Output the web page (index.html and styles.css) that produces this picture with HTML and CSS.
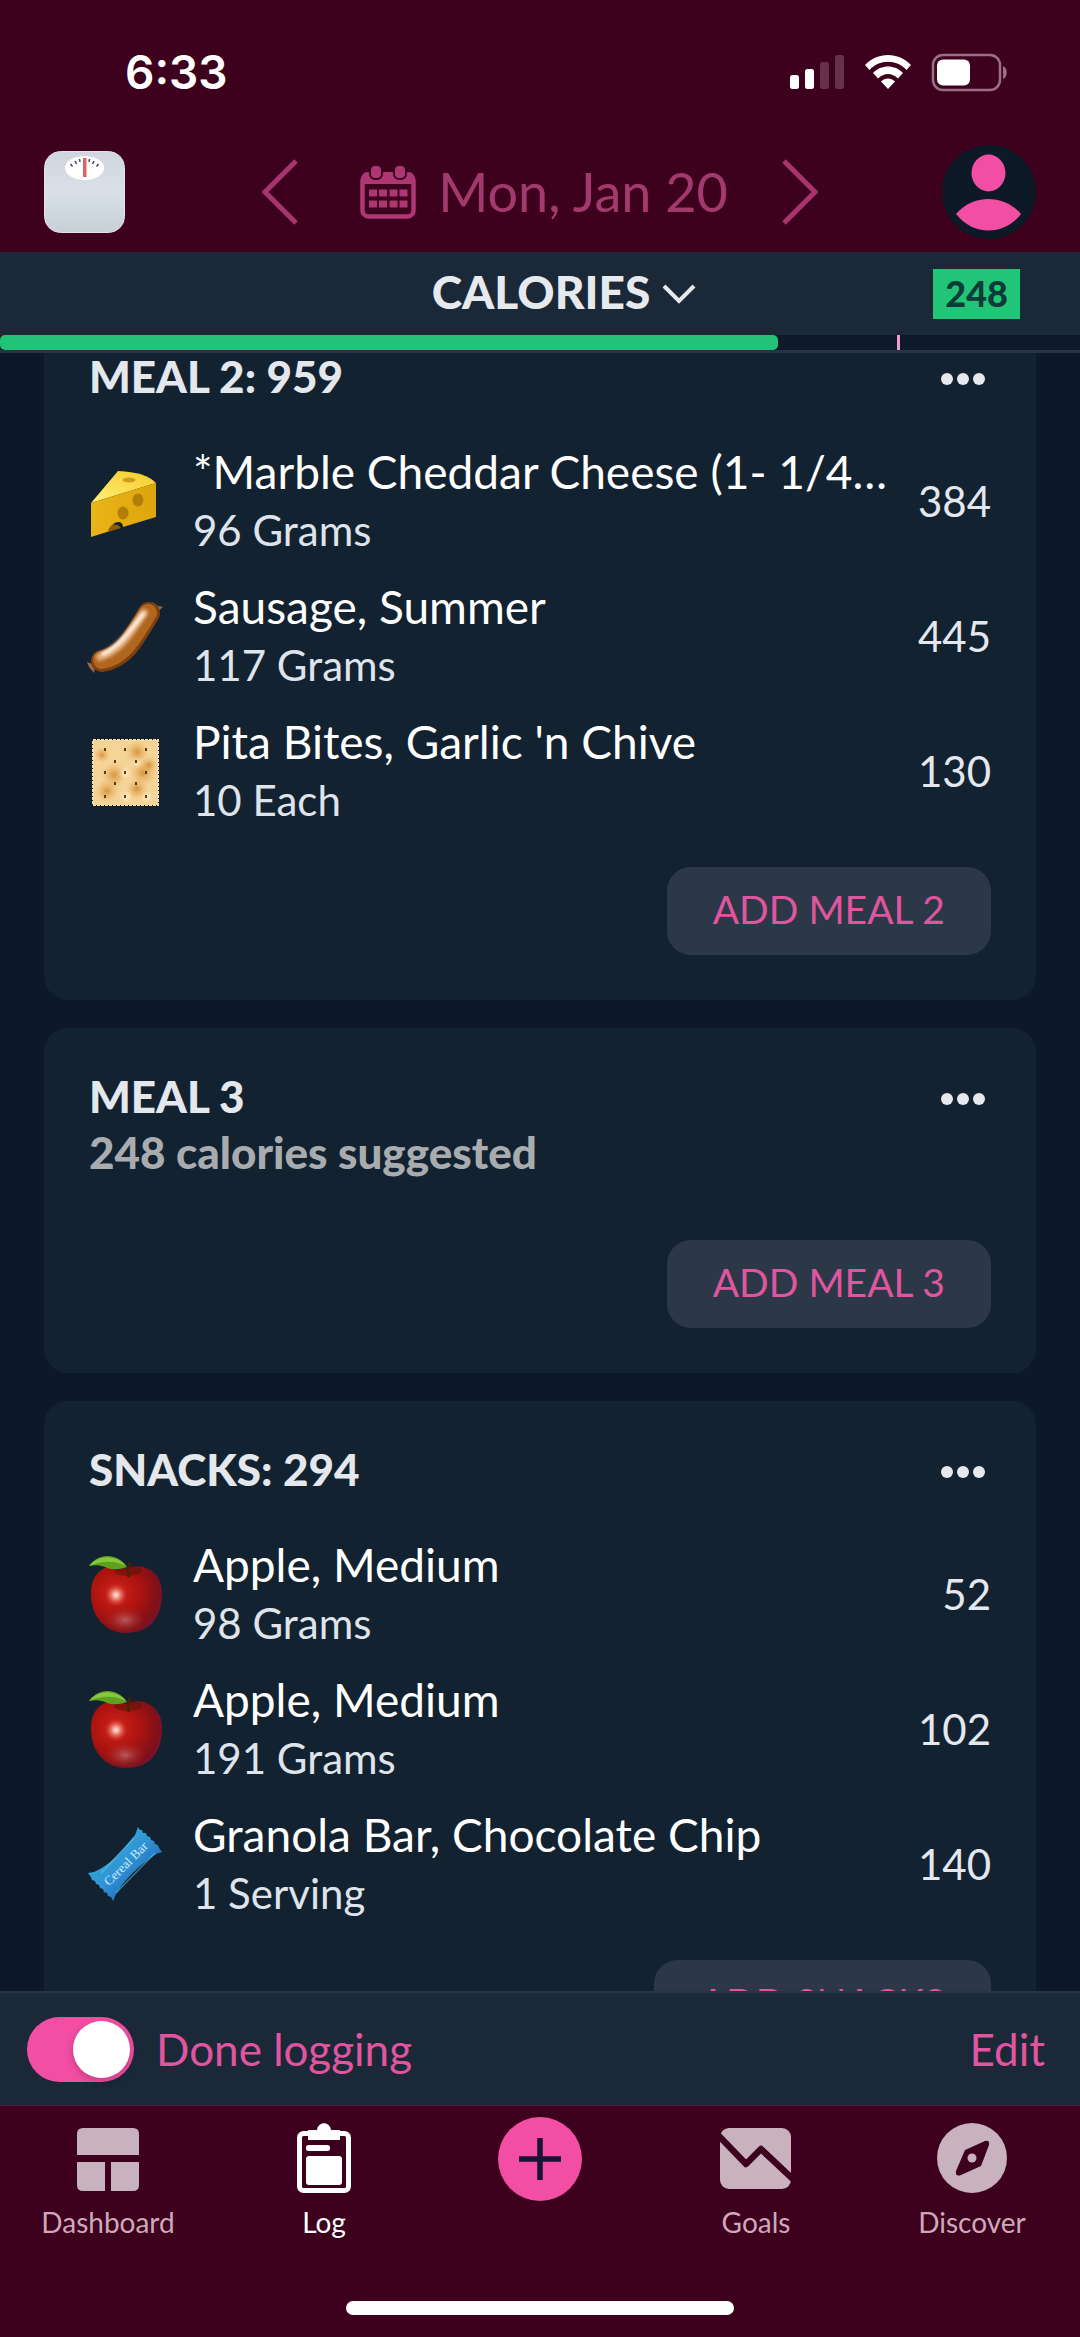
FILE: index.html
```html
<!DOCTYPE html>
<html lang="en">
<head>
<meta charset="utf-8">
<meta name="viewport" content="width=device-width, initial-scale=1">
<title>Food log</title>
<link rel="stylesheet" href="styles.css">
</head>
<body>
<svg class="defs" aria-hidden="true">
  <defs>
    <linearGradient id="scaleBody" x1="0" y1="0" x2="0" y2="1"><stop offset="0" stop-color="#cfd6df"/><stop offset=".5" stop-color="#dae0e8"/><stop offset="1" stop-color="#c6d0d6"/></linearGradient>
    <linearGradient id="cheeseTop" x1="0" y1="1" x2="1" y2="0"><stop offset="0" stop-color="#fff078"/><stop offset="1" stop-color="#f6cb2a"/></linearGradient>
    <linearGradient id="cheeseSide" x1="0" y1="0" x2="1" y2="0"><stop offset="0" stop-color="#eab519"/><stop offset="1" stop-color="#dda50c"/></linearGradient>
    <linearGradient id="bar" x1="0" y1="0" x2="1" y2="1"><stop offset="0" stop-color="#3fb8d8"/><stop offset=".5" stop-color="#2f93d6"/><stop offset=".8" stop-color="#1f63b4"/><stop offset="1" stop-color="#2f9fd0"/></linearGradient>
    <radialGradient id="appleBody" cx=".35" cy=".4" r=".75"><stop offset="0" stop-color="#cf221b"/><stop offset=".45" stop-color="#ad130f"/><stop offset=".8" stop-color="#7d1018"/><stop offset="1" stop-color="#7a1250"/></radialGradient>
    <radialGradient id="appleShine"><stop offset="0" stop-color="#fff0e6"/><stop offset=".3" stop-color="#f4a594" stop-opacity=".9"/><stop offset="1" stop-color="#d8261f" stop-opacity="0"/></radialGradient>
    <radialGradient id="appleGlow"><stop offset="0" stop-color="#c98a8a" stop-opacity=".6"/><stop offset="1" stop-color="#a02020" stop-opacity="0"/></radialGradient>
    <radialGradient id="toast"><stop offset="0" stop-color="#cf8428" stop-opacity=".8"/><stop offset="1" stop-color="#e8b060" stop-opacity="0"/></radialGradient>
    <filter id="soft" x="-30%" y="-30%" width="160%" height="160%"><feGaussianBlur stdDeviation="1.6"/></filter>
    <symbol id="apple" viewBox="0 0 74 80">
      <path d="M37 15C28 9 2 10 2 40c0 22 14 39 35 39 22 0 36-14 36-40C73 13 48 8 37 15z" fill="url(#appleBody)"/>
      <ellipse cx="36" cy="66" rx="22" ry="14" fill="url(#appleGlow)"/>
      <circle cx="27" cy="41" r="12" fill="url(#appleShine)"/>
      <ellipse cx="39" cy="17" rx="14" ry="5" fill="#5a1408" opacity=".55"/>
      <path d="M38 23c0-6 0-10 2-15l2 1c-2 5-2 8-1 14z" fill="#4c2309"/>
      <path d="M0 12C9-1 28-2 38 13c-9 3-16 3-22 0-6-2-10-2-16-1z" fill="#5fa021"/>
      <path d="M0 12C9 1 26 0 37 12 26 7 14 6 0 12z" fill="#86c83c"/>
    </symbol>
  </defs>
</svg>
<div class="app">
  <header class="top">
    <div class="status">
      <span class="time">6:33</span>
      <svg class="status-icons" viewBox="0 0 217 40" aria-label="Signal, Wi-Fi and battery">
        <rect x="0" y="23" width="9" height="14" rx="2.500" fill="#fff"/>
        <rect x="15" y="17" width="9" height="20" rx="2.500" fill="#fff"/>
        <rect x="30" y="10" width="9" height="27" rx="2.500" fill="#69304b"/>
        <rect x="45" y="3" width="9" height="34" rx="2.500" fill="#69304b"/>
        <path d="M75 13C87 -.4 109 -.4 121 13l-4.500 5C107 7 89 7 79.500 18zM83 21c8-8.600 22-8.600 30 0l-5 5.500c-6-6-14-6-20 0zM91 29.500c4-4 10-4 14 0L98 37z" fill="#fff"/>
        <rect x="143" y="3" width="67" height="35" rx="10" fill="none" stroke="#9a6f84" stroke-width="2.500"/>
        <rect x="147" y="7" width="33" height="26" rx="6" fill="#fff" transform="translate(0 .5)"/>
        <path d="M213 14c5 2 5 11 0 13z" fill="#9a6f84"/>
      </svg>
    </div>
    <nav class="datebar" aria-label="Day">
      <button class="plain scale" aria-label="Weigh in">
        <svg viewBox="0 0 81 82"><rect x=".5" y=".5" width="80" height="81" rx="16" fill="url(#scaleBody)" stroke="#e9dfe8"/><ellipse cx="40.500" cy="17" rx="19.500" ry="12" fill="#fff"/><path d="M26.500 13l2 2.500M31 10l1.500 3M35.500 8l.5 3M45.500 8l-.5 3M50 10l-1.500 3M54.500 13l-2 2.500" stroke="#445" stroke-width="1.500" fill="none"/><rect x="39" y="7" width="3.500" height="19" fill="#dd6464"/></svg>
      </button>
      <div class="picker">
        <button class="plain chev" aria-label="Previous day"><svg viewBox="0 0 36 66"><path d="M34 2L3 33l31 31" fill="none" stroke="#a8346f" stroke-width="5"/></svg></button>
        <button class="plain date">
          <svg viewBox="0 0 56 53"><rect x="2.500" y="8.500" width="51" height="42" rx="6" fill="none" stroke="#ae3673" stroke-width="4.500"/><path d="M2 18v-6q0-6 6-6h40q6 0 6 6v6z" fill="#ae3673"/><rect x="10" y="-1" width="12" height="14" rx="5" fill="#ae3673" stroke="#3d001d" stroke-width="2"/><rect x="34" y="-1" width="12" height="14" rx="5" fill="#ae3673" stroke="#3d001d" stroke-width="2"/><path d="M9 23.500h8v7H9zM19 23.500h8v7h-8zM29.500 23.500h8v7h-8zM39.500 23.500h8v7h-8zM9 34.500h8v7H9zM19 34.500h8v7h-8zM29.500 34.500h8v7h-8zM39.500 34.500h8v7h-8z" fill="#ae3673"/></svg>
          <span>Mon, Jan 20</span>
        </button>
        <button class="plain chev" aria-label="Next day"><svg viewBox="0 0 36 66"><path d="M2 2l31 31L2 64" fill="none" stroke="#a8346f" stroke-width="5"/></svg></button>
      </div>
      <button class="plain avatar" aria-label="Profile">
        <svg viewBox="0 0 94 94"><circle cx="47" cy="47" r="47" fill="#0d1927"/><ellipse cx="46.500" cy="28" rx="17" ry="18.500" fill="#f24ea3"/><path d="M14 69c17-20 48-20 65 0-17 22-48 22-65 0z" fill="#f24ea3"/></svg>
      </button>
    </nav>
  </header>

  <section class="summary" aria-label="Budget">
    <div class="summary-row">
      <button class="plain metric"><span>CALORIES</span><svg viewBox="0 0 34 22"><path d="M2 3l15 15L32 3" fill="none" stroke="#e6e9ed" stroke-width="4"/></svg></button>
      <span class="badge">248</span>
    </div>
    <div class="progress"><div class="fill" style="width:72%"></div><div class="marker" style="left:83.1%"></div></div>
  </section>

  <main class="feed">
    <div class="cards">
      <section class="card">
        <div class="card-head"><h2>MEAL 2: 959</h2><button class="plain more" aria-label="Meal 2 options"><i></i><i></i><i></i></button></div>
        <ul class="foods">
          <li>
            <svg class="food" viewBox="0 0 74 80"><path d="M2 42L29 10q28 1 38 12z" fill="url(#cheeseTop)"/><path d="M2 42L67 22v34L34 66c0-8-12-6-13 4L2 76z" fill="url(#cheeseSide)"/><path d="M19 71c1-8 9-10 13-4z" fill="#8e5c06"/><ellipse cx="40" cy="19" rx="6.500" ry="2.500" fill="#d59a1c"/><ellipse cx="49" cy="39" rx="5.500" ry="6.500" fill="#b27d0b"/><ellipse cx="34" cy="52" rx="5.500" ry="6.500" fill="#b27d0b"/></svg>
            <div class="text"><span class="name">*Marble Cheddar Cheese (1- 1/4…</span><span class="qty">96 Grams</span></div><span class="cal">384</span>
          </li>
          <li>
            <svg class="food" viewBox="0 0 74 80"><path d="M64 14l-1-8 6 4 5 1-6 5zM6 69l-8-3 2 5 5 6 1-6z" fill="#9a6747"/><path d="M13 65C36 61 45 42 60 17" fill="none" stroke="#7b3f10" stroke-width="22" stroke-linecap="round"/><path d="M13 64C35 60 44 41 59 17" fill="none" stroke="#b0661f" stroke-width="18" stroke-linecap="round"/><path d="M11 61C32 54 41 37 55 17" fill="none" stroke="#e0a878" stroke-width="8" stroke-linecap="round" filter="url(#soft)"/><path d="M14 58C31 50 39 37 54 18" fill="none" stroke="#fff1e2" stroke-width="4" stroke-linecap="round" filter="url(#soft)"/></svg>
            <div class="text"><span class="name">Sausage, Summer</span><span class="qty">117 Grams</span></div><span class="cal">445</span>
          </li>
          <li>
            <svg class="food" viewBox="0 0 74 80"><rect x="4" y="9" width="65" height="65" fill="#f5d498" stroke="#f7dca6" stroke-width="2" stroke-dasharray="3 1"/><g fill="url(#toast)"><circle cx="48" cy="21" r="12"/><circle cx="25" cy="44" r="13"/><circle cx="54" cy="42" r="13"/><circle cx="18" cy="60" r="12"/><circle cx="60" cy="34" r="9"/><circle cx="13" cy="24" r="8"/><circle cx="48" cy="58" r="11"/></g><g fill="#fff0cc" opacity=".7" filter="url(#soft)"><circle cx="36" cy="42" r="4"/><circle cx="37" cy="66" r="4"/><circle cx="58" cy="66" r="4"/><circle cx="48" cy="32" r="3"/></g><path d="M16 17v3M36 17v3M57 17v3M26 29v3M47 29v3M16 40v3M36 40v3M57 40v3M26 51v3M47 51v3M16 64v3M36 64v3M57 64v3" stroke="#5a3a18" stroke-width="2"/></svg>
            <div class="text"><span class="name">Pita Bites, Garlic 'n Chive</span><span class="qty">10 Each</span></div><span class="cal">130</span>
          </li>
        </ul>
        <button class="add">ADD MEAL 2</button>
      </section>

      <section class="card">
        <div class="card-head"><h2>MEAL 3</h2><button class="plain more" aria-label="Meal 3 options"><i></i><i></i><i></i></button></div>
        <p class="hint">248 calories suggested</p>
        <button class="add">ADD MEAL 3</button>
      </section>

      <section class="card">
        <div class="card-head"><h2>SNACKS: 294</h2><button class="plain more" aria-label="Snacks options"><i></i><i></i><i></i></button></div>
        <ul class="foods">
          <li>
            <svg class="food"><use href="#apple"/></svg>
            <div class="text"><span class="name">Apple, Medium</span><span class="qty">98 Grams</span></div><span class="cal">52</span>
          </li>
          <li>
            <svg class="food"><use href="#apple"/></svg>
            <div class="text"><span class="name">Apple, Medium</span><span class="qty">191 Grams</span></div><span class="cal">102</span>
          </li>
          <li>
            <svg class="food" viewBox="0 0 74 80"><path d="M49 3l2 3 2 0 1 3 3 0 1 3 3 1 1 3 3 1 1 3 3 1 1 3 3 4-6 2C55 39 40 49 27 70l-3 7-2-4-3-1-1-3-3-1-1-3-3-1-1-3-3-1-1-3-3-1-1-3-3-4 6-1C23 40 34 26 46 11z" fill="url(#bar)"/><path d="M12 49L45 14M27 69L66 29" stroke="#66cfe8" stroke-width="1.500" opacity=".5"/><text class="wrapper" x="37" y="44" transform="rotate(-45 37 40)" text-anchor="middle">Cereal Bar</text></svg>
            <div class="text"><span class="name">Granola Bar, Chocolate Chip</span><span class="qty">1 Serving</span></div><span class="cal">140</span>
          </li>
        </ul>
        <button class="add">ADD SNACKS</button>
      </section>
    </div>
  </main>

  <div class="done">
    <label class="done-label"><input type="checkbox" class="switch" checked><span>Done logging</span></label>
    <button class="plain edit">Edit</button>
  </div>

  <footer class="bottom">
    <nav class="tabs" aria-label="Main">
      <a href="#dashboard"><svg viewBox="0 0 84 84"><path d="M11 38V17q0-6 6-6h50q6 0 6 6v21zM11 45h28v29H17q-6 0-6-6zM45 45h28v23q0 6-6 6H45z" fill="#c8b2bd"/></svg><span>Dashboard</span></a>
      <a href="#log" class="on" aria-current="page"><svg viewBox="0 0 84 84"><rect x="17.500" y="16.500" width="49" height="57" rx="4" fill="none" stroke="#fff" stroke-width="5"/><path d="M26 13h9c1-9 13-9 14 0h9v10H26z" fill="#fff"/><rect x="24" y="28" width="24" height="6" rx="2.500" fill="#fff"/><rect x="24" y="39" width="36" height="29" rx="3" fill="#fff"/></svg><span>Log</span></a>
      <a href="#add" class="plus" aria-label="Add"><svg viewBox="0 0 84 84"><circle cx="42" cy="42" r="42" fill="#f24ea3"/><path d="M21 42h42M42 21v42" stroke="#1b1333" stroke-width="5.500"/></svg></a>
      <a href="#goals"><svg viewBox="0 0 84 84"><rect x="6" y="11" width="71" height="61" rx="9" fill="#c8b2bd"/><path d="M2 16L32 47l15-15 35 33" fill="none" stroke="#3d001d" stroke-width="6.500" stroke-linejoin="round"/></svg><span>Goals</span></a>
      <a href="#discover"><svg viewBox="0 0 84 84"><circle cx="42" cy="41" r="35" fill="#c8b2bd"/><path d="M35 33l20-9q5-1 4 4l-8 21-20 9q-6 2-5-4z" fill="#3d001d"/><circle cx="42" cy="41" r="4.500" fill="#c8b2bd"/></svg><span>Discover</span></a>
    </nav>
    <div class="home"></div>
  </footer>
</div>
</body>
</html>
```
FILE: styles.css
```css
* { box-sizing: border-box; }
body {
  margin: 0;
  background: #3d001d;
  font-family: Lato, "Liberation Sans", sans-serif;
  color: #fff;
}
h2, p, ul { margin: 0; padding: 0; }
svg { display: block; }
.defs { position: absolute; width: 0; height: 0; }
button { font-family: inherit; cursor: pointer; }
.plain { border: 0; padding: 0; background: none; color: inherit; }

.app { display: flex; flex-direction: column; height: 100vh; }

.status {
  display: flex;
  align-items: center;
  justify-content: space-between;
  height: 132px;
  padding: 12px 73px 0 125px;
}
.time { font: 600 46px/56px Inter, sans-serif; }
.status-icons { width: 217px; height: 40px; }

.datebar {
  display: grid;
  grid-template-columns: 1fr auto 1fr;
  align-items: center;
  height: 120px;
  padding: 0 44px;
}
.scale { width: 81px; }
.avatar { width: 94px; justify-self: end; }
.picker { display: flex; align-items: center; gap: 54px; color: #a33a6e; }
.chev { width: 36px; }
.picker .date { display: flex; align-items: center; gap: 22px; padding-left: 8px; font-size: 54px; line-height: 64px; }
.date svg { width: 56px; }

.summary { background: #1a2837; border-bottom: 3px solid #263443; }
.summary-row {
  display: grid;
  grid-template-columns: 1fr auto 1fr;
  align-items: center;
  height: 83px;
  padding: 0 60px;
}
.metric {
  grid-column: 2;
  display: flex;
  align-items: center;
  gap: 12px;
  padding-left: 48px;
  font-size: 46px;
  font-weight: 900;
  line-height: 52px;
  color: #e6e9ed;
}
.metric span { padding-bottom: 4px; }
.metric svg { width: 34px; }
.badge {
  justify-self: end;
  padding: 0 12px 2px;
  background: #21c577;
  color: #0c3b3a;
  font-size: 36px;
  font-weight: 900;
  line-height: 48px;
}
.progress { position: relative; height: 15px; background: #0e1929; }
.fill { height: 100%; border-radius: 5px; background: #22c376; }
.marker { position: absolute; top: 0; width: 3px; height: 100%; background: #f09ccb; }

.feed { flex: 1; min-height: 0; overflow: hidden; background: #0d1928; }
.cards { display: flex; flex-direction: column; gap: 28px; margin-top: -45px; padding: 0 44px; }
.card {
  display: flex;
  flex-direction: column;
  padding: 46px 45px 45px;
  border-radius: 24px;
  background: #132231;
}
.card-head { display: flex; align-items: center; justify-content: space-between; }
.card-head h2 { font-size: 44px; font-weight: 900; line-height: 44px; color: #e4e8ed; }
.more { display: flex; gap: 4px; padding: 6px 6px 0; }
.more i { width: 12px; height: 12px; border-radius: 50%; background: #e6e8eb; }
.hint { margin: 8px 0 23px; font-size: 44px; font-weight: 900; line-height: 52px; color: #a9acaf; }

.foods { display: flex; flex-direction: column; gap: 17px; margin-top: 44px; list-style: none; }
.foods li { display: flex; align-items: center; }
.food { flex: none; width: 74px; height: 80px; overflow: visible; }
.text { display: flex; flex: 1; flex-direction: column; min-width: 0; margin: 0 22px 0 30px; line-height: 59px; }
.name { overflow: hidden; font-size: 46px; text-overflow: ellipsis; white-space: nowrap; }
.qty { font-size: 42px; color: #dfe4ec; }
.cal { font-size: 42px; line-height: 58px; color: #e4e8ee; }
.wrapper { font: 13px "Liberation Serif", serif; fill: #cfeefa; }

.add {
  align-self: flex-end;
  height: 88px;
  margin-top: 37px;
  padding: 0 46px 4px;
  border: 0;
  border-radius: 24px;
  background: #2c3847;
  color: #df559e;
  font-size: 39px;
  line-height: 48px;
}
.hint + .add { margin-top: 39px; }

.done {
  display: flex;
  align-items: center;
  justify-content: space-between;
  height: 115px;
  padding: 0 35px 0 27px;
  border-top: 2px solid #263443;
  border-bottom: 1px solid #4a2138;
  background: #1a2837;
  color: #e0559f;
  font-size: 44px;
  line-height: 52px;
}
.done-label { display: flex; align-items: center; gap: 22px; }
.edit { font-size: 44px; line-height: 52px; }
.switch {
  appearance: none;
  display: flex;
  align-items: center;
  justify-content: flex-end;
  width: 107px;
  height: 65px;
  margin: 0;
  padding: 4px;
  border-radius: 33px;
  background: #f24ea3;
}
.switch::before { content: ""; width: 57px; height: 57px; border-radius: 50%; background: #fff; box-shadow: 0 3px 8px rgb(0 0 0 / 20%); }
.switch:not(:checked) { justify-content: flex-start; background: #4a5664; }

.bottom { display: flex; flex-direction: column; align-items: center; padding: 11px 0 22px; }
.tabs { display: grid; grid-template-columns: repeat(5, 1fr); width: 100%; height: 184px; }
.tabs a { display: flex; flex-direction: column; align-items: center; gap: 3px; color: #cda9bb; font-size: 28px; line-height: 36px; text-decoration: none; }
.tabs svg { width: 84px; height: 84px; }
.tabs .on { color: #fff; }
.home { width: 36%; height: 14px; border-radius: 7px; background: #fff; }
```
